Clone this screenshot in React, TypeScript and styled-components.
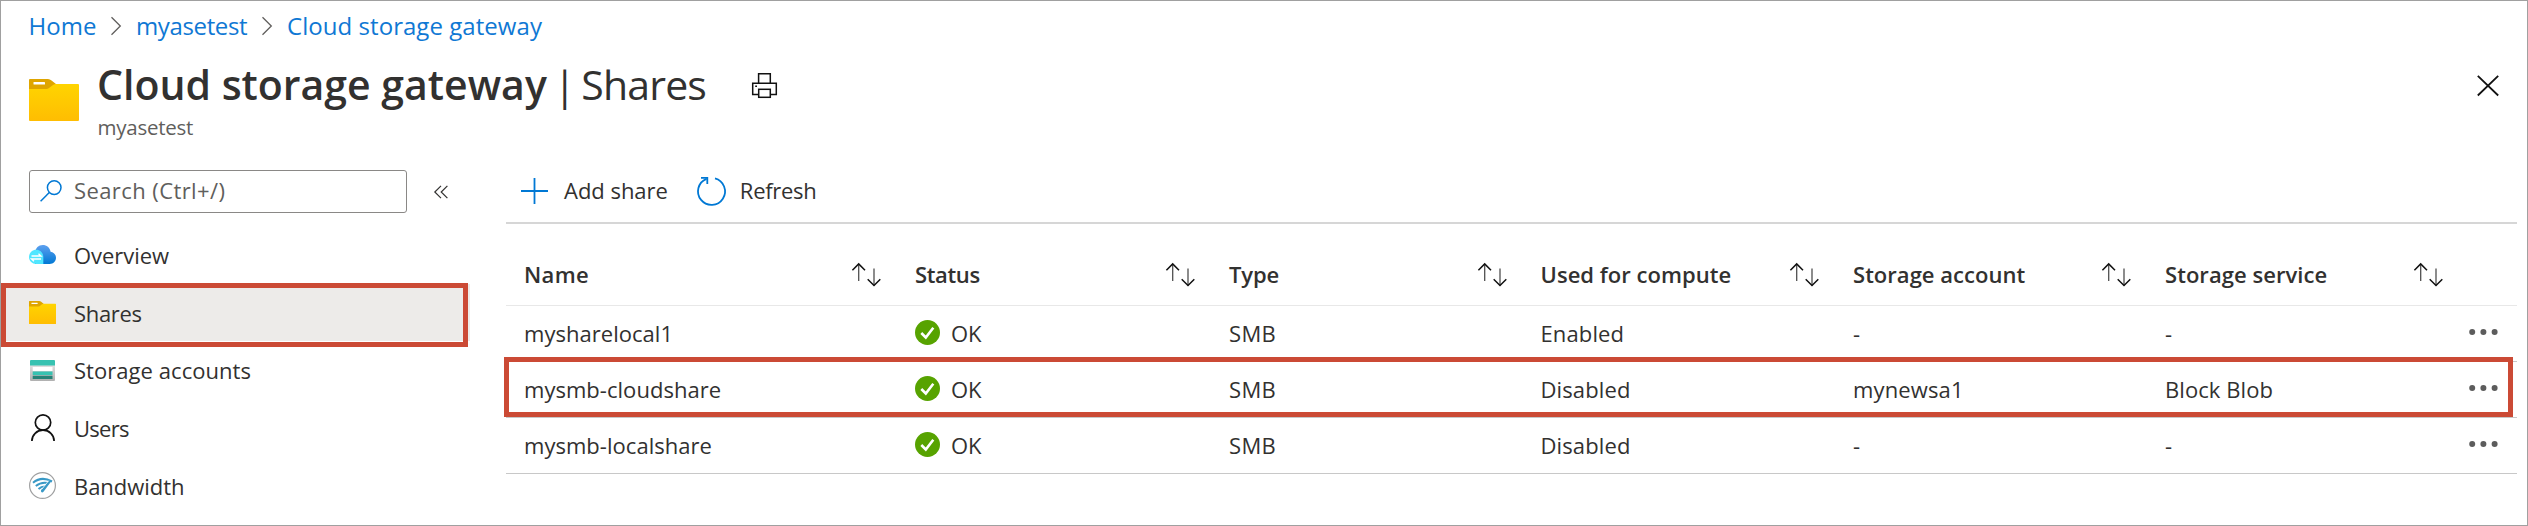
import React from 'react';
import styled, { createGlobalStyle } from 'styled-components';

const GlobalStyle = createGlobalStyle`
  *, *::before, *::after { box-sizing: border-box; }
  html, body { margin: 0; padding: 0; background: #fff; }
  body { font-family: "Open Sans", "Noto Sans", sans-serif; color: #323130; }
  svg { display: block; flex: none; overflow: visible; }
`;

const Frame = styled.div`
  width: 2528px;
  height: 526px;
  border: 1px solid #a0a0a0;
  background: #fff;
  overflow: hidden;
`;

const Label = styled.span<{ $ls?: number; $strong?: boolean; $lift?: number }>`
  margin-bottom: ${(p) => p.$lift ?? 2}px;
  font-size: 22px;
  line-height: 30px;
  font-weight: ${(p) => (p.$strong ? 600 : 400)};
  letter-spacing: ${(p) => p.$ls ?? 0}px;
  white-space: nowrap;
`;

const Breadcrumbs = styled.nav`
  display: flex;
  align-items: center;
  height: 42px;
  padding: 8px 0 0 27.5px;
`;

const Crumb = styled.a<{ $ls: number; $width: number }>`
  width: ${(p) => p.$width}px;
  font-size: 24px;
  line-height: 34px;
  letter-spacing: ${(p) => p.$ls}px;
  color: #0f78d4;
  white-space: nowrap;
`;

const CrumbSeparator = styled.span<{ $gap: number }>`
  width: 10px;
  margin-right: ${(p) => p.$gap}px;
`;

const Header = styled.header`
  display: flex;
  height: 127px;
  padding: 11px 28px 0 28px;
`;

const HeaderIcon = styled.div`
  width: 50px;
  margin-right: 18px;
  padding-top: 25px;
`;

const Titles = styled.div`
  display: flex;
  flex-direction: column;
`;

const Title = styled.h1`
  display: flex;
  margin: 0;
  font-size: 41px;
  line-height: 60px;
  font-weight: 600;
  white-space: nowrap;
`;

const TitleBar = styled.span`
  width: 23px;
  margin: 0 5px 0 6.5px;
  font-weight: 400;
  text-align: center;
`;

const TitleSection = styled.span`
  font-weight: 400;
  letter-spacing: -0.84px;
`;

const Subtitle = styled.div`
  padding-left: 0.5px;
  font-size: 20.5px;
  line-height: 26px;
  letter-spacing: -0.25px;
  color: #605e5c;
`;

const PrintButton = styled.div`
  margin: 19px 0 0 46px;
`;

const CloseButton = styled.div`
  margin: 21px 0 0 auto;
`;

const Body = styled.div`
  display: flex;
`;

const Sidebar = styled.aside`
  width: 469px;
  margin-right: 36px;
`;

const SearchRow = styled.div`
  display: flex;
  align-items: center;
  height: 43px;
  margin-bottom: 13.25px;
  padding-left: 28px;
`;

const SearchBox = styled.div`
  display: flex;
  align-items: center;
  gap: 12px;
  width: 378px;
  height: 43px;
  margin-right: 27px;
  padding: 0 10px 1px;
  border: 1px solid #8a8886;
  border-radius: 3px;
  color: #605e5c;
`;

const NavItem = styled.div<{ $selected?: boolean }>`
  position: relative;
  display: flex;
  align-items: center;
  gap: 17px;
  height: 57.75px;
  padding-left: 28px;
  background: ${(p) => (p.$selected ? 'linear-gradient(#edebe9, #edebe9) top / 100% 57px no-repeat' : 'transparent')};
`;

const NavIcon = styled.span`
  display: flex;
  justify-content: center;
  width: 27px;
  margin: 0 1px 1px 0;
`;

const SelectionOutline = styled.div`
  position: absolute;
  top: -1px;
  left: 0;
  width: 467px;
  height: 64px;
  border: 5px solid #cb4a35;
  z-index: 1;
`;

const Main = styled.main`
  width: 2011px;
`;

const Toolbar = styled.div`
  display: flex;
  align-items: center;
  height: 54px;
  padding: 0 0 11px 15px;
  border-bottom: 2px solid #d6d6d6;
`;

const ToolButton = styled.div<{ $gap: number; $after: number }>`
  display: flex;
  align-items: center;
  gap: ${(p) => p.$gap}px;
  margin-right: ${(p) => p.$after}px;
`;

const Row = styled.div<{ $header?: boolean }>`
  position: relative;
  display: grid;
  grid-template-columns: 391px 314px 311.5px 312.5px 312px 311.5px 1fr;
  height: ${(p) => (p.$header ? 82 : 56)}px;
  padding-top: ${(p) => (p.$header ? 20 : 0)}px;
  border-bottom: 1px solid ${(p) => (p.$header ? '#e8e8e8' : '#c8c8c8')};
`;

const Cell = styled.div`
  display: flex;
  align-items: center;
  justify-content: space-between;
  padding: 0 16px 0 18px;
`;

const StatusCell = styled(Cell)`
  justify-content: flex-start;
  gap: 11px;
`;

const StatusIcon = styled.span`
  margin-bottom: 2px;
`;

const MenuCell = styled.div`
  display: flex;
  align-items: center;
  padding: 0 0 3px 10px;
`;

const RowOutline = styled.div`
  position: absolute;
  top: -5px;
  left: -2px;
  width: 2009px;
  height: 60px;
  border: 5px solid #cb4a35;
  z-index: 1;
`;

const Chevron = () => (
  <svg width="10" height="18" viewBox="0 0 10 18" fill="none" stroke="#605e5c" strokeWidth="1.3">
    <path d="M.5.3 9.3 9 .5 17.7" />
  </svg>
);

const FolderIcon = ({ width, height }: { width: number; height: number }) => (
  <svg width={width} height={height} viewBox="0 0 50 42" preserveAspectRatio="none">
    <defs>
      <linearGradient id="folder" x1="0" y1="0" x2="0" y2="1">
        <stop offset="0" stopColor="#ffd400" />
        <stop offset="1" stopColor="#ffbd02" />
      </linearGradient>
    </defs>
    <path d="M1 0H19Q21 0 22.500 1.500L27 5V12H0V1Q0 0 1 0Z" fill="#dfa500" />
    <path d="M0 10H17.500Q19 10 20 9L24 6Q25.500 5 27 5H49Q50 5 50 6V41Q50 42 49 42H1Q0 42 0 41Z" fill="url(#folder)" />
    <rect x="4.500" y="3" width="11.500" height="2.500" rx=".6" fill="#fff" />
  </svg>
);

const PrinterIcon = () => (
  <svg width="25" height="25" viewBox="0 0 25 25" fill="none" stroke="#111" strokeWidth="1.5">
    <path d="M6.600 10V.7H18.300V10M6.500 21.500H.7V10.200H24.300V21.500H18.500" />
    <rect x="6.700" y="16.300" width="11.600" height="8" />
    <path d="M3.200 13.200H5" />
  </svg>
);

const CloseIcon = () => (
  <svg width="22" height="22" viewBox="0 0 22 22" fill="none" stroke="#111" strokeWidth="1.8">
    <path d="M.8.8 21.200 20.500M21.200.8.8 20.500" />
  </svg>
);

const SearchIcon = () => (
  <svg width="22" height="22" viewBox="0 0 22 22" fill="none" stroke="#0078d4" strokeWidth="1.5">
    <circle cx="14.200" cy="7.600" r="6.800" />
    <path d="M9.300 12.500.6 21.200" />
  </svg>
);

const CollapseIcon = () => (
  <svg width="14" height="14" viewBox="0 0 14 14" fill="none" stroke="#323130" strokeWidth="1.2">
    <path d="M7 .8.8 7 7 13.200M13.400.8 7.200 7l6.200 6.200" />
  </svg>
);

const CloudIcon = () => (
  <svg width="27" height="19" viewBox="0 0 27 19">
    <defs>
      <linearGradient id="cloud" x1="0" y1="0" x2="0" y2="1">
        <stop offset="0" stopColor="#5ea0ef" />
        <stop offset="1" stopColor="#0078d4" />
      </linearGradient>
    </defs>
    <path d="M6 19V7.500C6.500 3 9.500 0 13.700 0c4 0 7.200 2.700 7.900 6.700 3.200.6 5.400 3 5.400 6.100C27 16.300 24.200 19 20.700 19Z" fill="url(#cloud)" />
    <path d="M7.200 4.800C11.200 4.800 14.300 8 14.300 12V19H7.200C3.200 19 0 16 0 12S3.200 4.800 7.200 4.800Z" fill="#50e6ff" />
    <path d="M2.500 11H12L9.500 8.800M12 14H2.500L5 16.200" fill="none" stroke="#fff" strokeWidth="1.300" />
  </svg>
);

const StorageIcon = () => (
  <svg width="25" height="21" viewBox="0 0 25 21">
    <defs>
      <linearGradient id="storage" x1="0" y1="0" x2="0" y2="1">
        <stop offset="0" stopColor="#e0e0e0" />
        <stop offset="1" stopColor="#b0b0b0" />
      </linearGradient>
    </defs>
    <path d="M0 5H25V20Q25 21 24 21H1Q0 21 0 20Z" fill="url(#storage)" />
    <path d="M1 0H24Q25 0 25 1V5.500H0V1Q0 0 1 0Z" fill="#37c2b1" />
    <rect x="2.700" y="7" width="19.800" height="4" fill="#fff" />
    <rect x="2.700" y="11.500" width="19.800" height="3.500" fill="#37c2b1" />
    <rect x="2.700" y="15.700" width="19.800" height="3.300" fill="#258277" />
  </svg>
);

const UserIcon = () => (
  <svg width="24" height="27" viewBox="0 0 24 27" fill="none" stroke="#111" strokeWidth="1.700">
    <circle cx="12" cy="8.500" r="7.700" />
    <path d="M.9 27C.9 20.800 5.800 16.200 12 16.200S23.100 20.800 23.100 27" />
  </svg>
);

const BandwidthIcon = () => (
  <svg width="27" height="27" viewBox="0 0 27 27" fill="none">
    <circle cx="13.500" cy="13.500" r="12.900" fill="#fff" stroke="#a0a1a2" strokeWidth="1.200" />
    <g stroke="#3999c6" strokeWidth="2">
      <path d="M4 10.800Q12.500 3.700 23 9.500" />
      <path d="M6.800 14Q12 9.600 19 11" />
      <path d="M9.500 17Q12.500 14.200 16.500 14.500" />
    </g>
    <path d="M20.500 8 22.500 9 14.500 19.800Q13 21.200 12 19.500 11.700 18.500 12.500 17.600Z" fill="#3999c6" />
    <path d="M19.800 8.500 12.800 17.200" stroke="#fff" strokeWidth=".8" />
  </svg>
);

const PlusIcon = () => (
  <svg width="27" height="26" viewBox="0 0 27 26" stroke="#0078d4" strokeWidth="1.800">
    <path d="M0 13H27M13.500 0V26" />
  </svg>
);

const RefreshIcon = () => (
  <svg width="29" height="28" viewBox="0 0 29 28" fill="none" stroke="#0078d4" strokeWidth="1.800">
    <path d="M18 1.300A13.500 13.500 0 1 1 9.500 1.800" />
    <path d="M4 .9H10.300V7" />
  </svg>
);

const SortIcon = () => (
  <svg width="29" height="24" viewBox="0 0 29 24" fill="none">
    <path d="M6.700 1V18M22 5.500V22.500" stroke="#505050" strokeWidth="1.300" />
    <path d="M.4 7.200 6.700.9 13 7.200M15.700 16.200 22 22.500 28.300 16.200" stroke="#111" strokeWidth="1.500" />
  </svg>
);

const OkIcon = () => (
  <svg width="25" height="25" viewBox="0 0 25 25" fill="none">
    <circle cx="12.500" cy="12.500" r="12.500" fill="#57a300" />
    <path d="M6.300 13 10.800 17.500 18.300 7.800" stroke="#fff" strokeWidth="2.600" />
  </svg>
);

const MoreIcon = () => (
  <svg width="29" height="6" viewBox="0 0 29 6" fill="#5c5c5c">
    <circle cx="3.200" cy="3" r="3" />
    <circle cx="14.400" cy="3" r="3" />
    <circle cx="25.600" cy="3" r="3" />
  </svg>
);

const navItems = [
  { text: 'Overview', ls: -0.05, icon: <CloudIcon /> },
  { text: 'Shares', ls: -0.33, icon: <FolderIcon width={27} height={23} />, selected: true },
  { text: 'Storage accounts', ls: 0.05, icon: <StorageIcon />, lift: 1 },
  { text: 'Users', ls: -0.72, icon: <UserIcon /> },
  { text: 'Bandwidth', ls: -0.04, icon: <BandwidthIcon /> },
];

const columns = [
  { text: 'Name', ls: 0.34 },
  { text: 'Status', ls: -0.35 },
  { text: 'Type', ls: -0.13 },
  { text: 'Used for compute', ls: 0.04 },
  { text: 'Storage account', ls: 0.03 },
  { text: 'Storage service', ls: 0.05 },
];

const shares = [
  { name: 'mysharelocal1', compute: 'Enabled', account: '-', service: '-' },
  { name: 'mysmb-cloudshare', compute: 'Disabled', account: 'mynewsa1', service: 'Block Blob', outlined: true },
  { name: 'mysmb-localshare', compute: 'Disabled', account: '-', service: '-' },
];

export default function App() {
  return (
    <Frame>
      <GlobalStyle />
      <Breadcrumbs>
        <Crumb $ls={0.05} $width={82.5}>Home</Crumb>
        <CrumbSeparator $gap={15}><Chevron /></CrumbSeparator>
        <Crumb $ls={-0.37} $width={126}>myasetest</Crumb>
        <CrumbSeparator $gap={15}><Chevron /></CrumbSeparator>
        <Crumb $ls={0.05} $width={260}>Cloud storage gateway</Crumb>
      </Breadcrumbs>
      <Header>
        <HeaderIcon><FolderIcon width={50} height={42} /></HeaderIcon>
        <Titles>
          <Title>
            <span>Cloud storage gateway</span>
            <TitleBar>|</TitleBar>
            <TitleSection>Shares</TitleSection>
          </Title>
          <Subtitle>myasetest</Subtitle>
        </Titles>
        <PrintButton><PrinterIcon /></PrintButton>
        <CloseButton><CloseIcon /></CloseButton>
      </Header>
      <Body>
        <Sidebar>
          <SearchRow>
            <SearchBox>
              <SearchIcon />
              <Label $ls={0.41}>Search (Ctrl+/)</Label>
            </SearchBox>
            <CollapseIcon />
          </SearchRow>
          {navItems.map((item) => (
            <NavItem key={item.text} $selected={item.selected}>
              <NavIcon>{item.icon}</NavIcon>
              <Label $ls={item.ls} $lift={item.lift ?? 0}>{item.text}</Label>
              {item.selected && <SelectionOutline />}
            </NavItem>
          ))}
        </Sidebar>
        <Main>
          <Toolbar>
            <ToolButton $gap={16} $after={29}>
              <PlusIcon />
              <Label $lift={1} $ls={-0.03}>Add share</Label>
            </ToolButton>
            <ToolButton $gap={14} $after={0}>
              <RefreshIcon />
              <Label $lift={1} $ls={-0.28}>Refresh</Label>
            </ToolButton>
          </Toolbar>
          <Row $header>
            {columns.map((column) => (
              <Cell key={column.text}>
                <Label $strong $ls={column.ls}>{column.text}</Label>
                <SortIcon />
              </Cell>
            ))}
          </Row>
          {shares.map((share) => (
            <Row key={share.name}>
              <Cell><Label $ls={0.03}>{share.name}</Label></Cell>
              <StatusCell>
                <StatusIcon><OkIcon /></StatusIcon>
                <Label $ls={-0.11}>OK</Label>
              </StatusCell>
              <Cell><Label $ls={0.32}>SMB</Label></Cell>
              <Cell><Label $ls={0.12}>{share.compute}</Label></Cell>
              <Cell><Label $ls={0.14}>{share.account}</Label></Cell>
              <Cell><Label $ls={0.08}>{share.service}</Label></Cell>
              <MenuCell><MoreIcon /></MenuCell>
              {share.outlined && <RowOutline />}
            </Row>
          ))}
        </Main>
      </Body>
    </Frame>
  );
}
